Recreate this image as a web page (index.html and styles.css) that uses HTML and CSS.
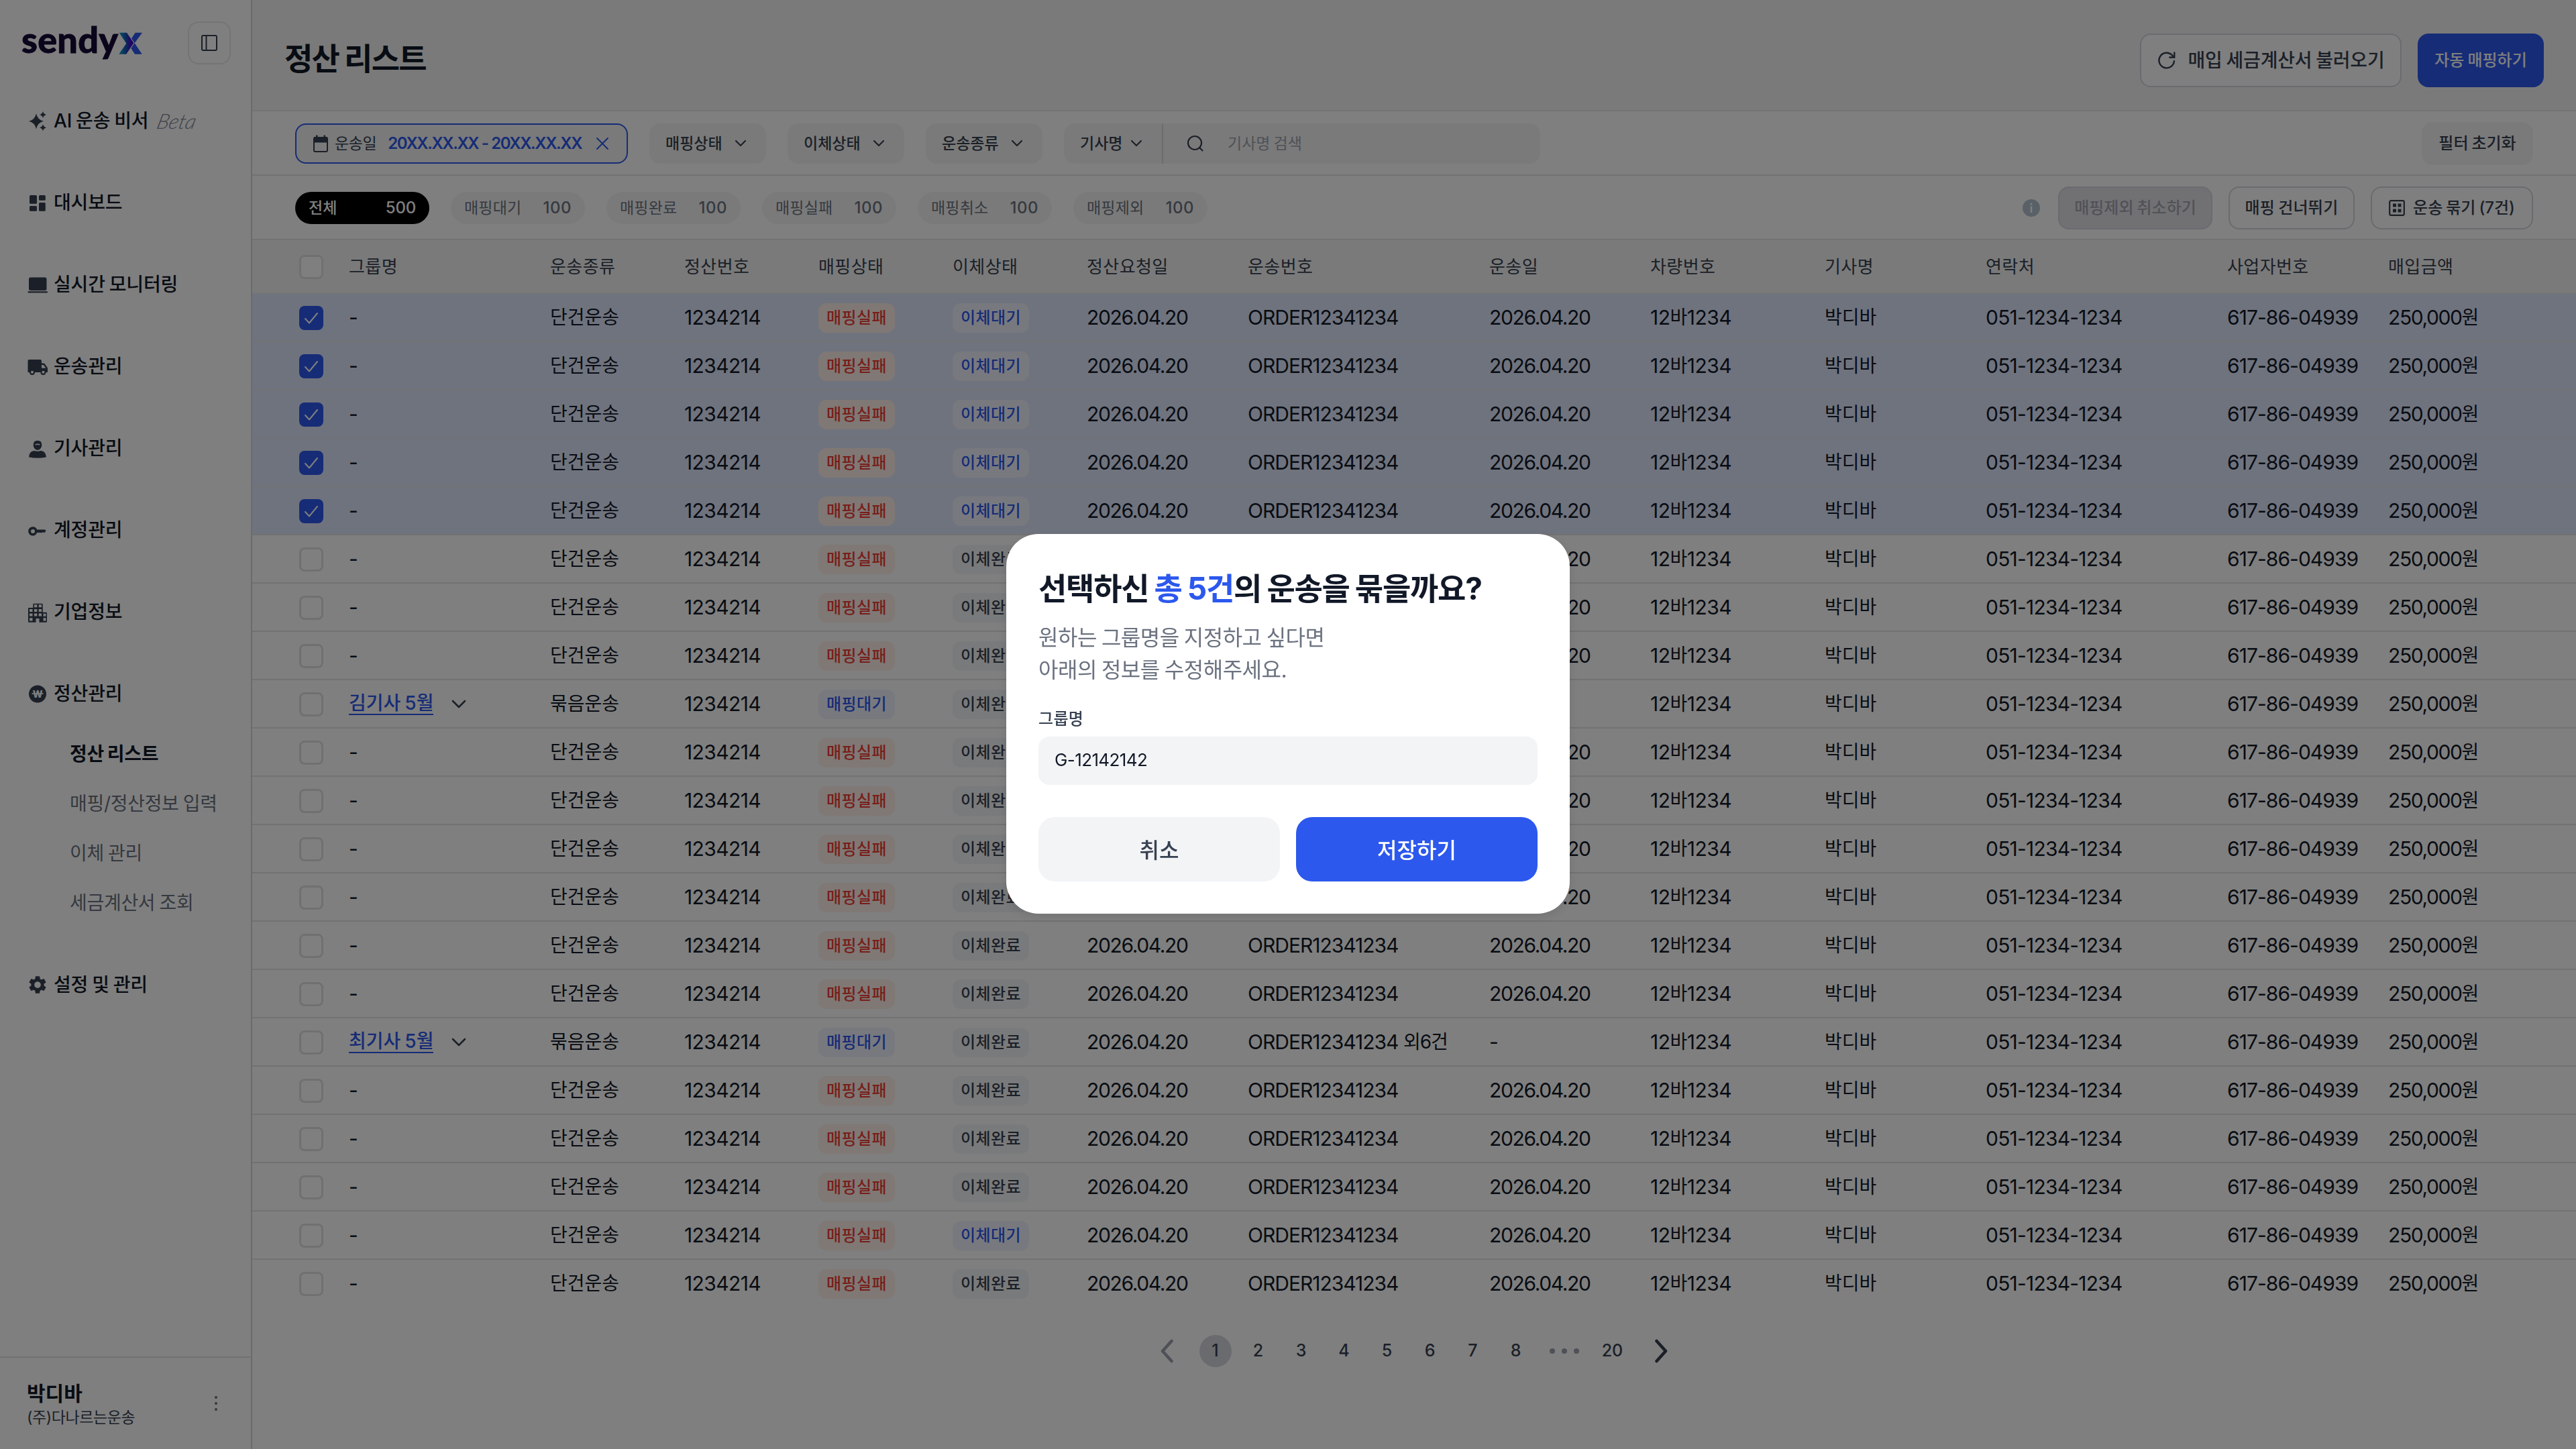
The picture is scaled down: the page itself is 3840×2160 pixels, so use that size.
FILE: index.html
```html
<!DOCTYPE html>
<html lang="ko">
<head>
    <meta charset="UTF-8">
    <meta name="viewport" content="width=device-width, initial-scale=1.0">
    <title>정산 리스트 - sendyx</title>
    <link rel="stylesheet" href="styles.css">
</head>
<body>
    <div class="app">
        <aside class="sidebar">
            <div class="sidebar-top">
                <svg class="logo" width="184" height="76" viewBox="0 -8 184 76">
                    <defs>
                        <linearGradient id="mark" x1="0" y1="0" x2="1" y2="0">
                            <stop offset="0" stop-color="#0aa5cc"/>
                            <stop offset="0.5" stop-color="#1a4fb4"/>
                            <stop offset="0.85" stop-color="#4600d0"/>
                            <stop offset="1" stop-color="#3c00b4"/>
                        </linearGradient>
                    </defs>
                    <text class="logo-text" x="0" y="46" textLength="144">sendy</text>
                    <path fill="url(#mark)" d="M145.7 15.7H157L167.3 31 156.3 47.7H145.3L156.3 31.7Z"/>
                    <path fill="#2c58ed" d="M169.7 15.7H180L168.7 31.3 179.7 47.7H169L163.3 38.9 168.5 31 164 24.3Z"/>
                </svg>
                <button class="collapse">
                    <svg width="32" height="32" viewBox="0 0 32 32" fill="none" stroke="#374151" stroke-width="2">
                        <rect x="5" y="5" width="22" height="22" rx="2"/>
                        <path d="M11.5 5v22"/>
                    </svg>
                </button>
            </div>

            <nav class="nav">
                <a class="nav-item">
                    <svg class="nav-icon" viewBox="0 0 32 32">
                        <path d="M14 5.3q2 9.2 10.8 11.4Q16 19 14 28.2 12 19 3.2 16.7 12 14.5 14 5.3z"/>
                        <path d="M24 2q1 4 5 5-4 1-5 5-1-4-5-5 4-1 5-5zM24 21.3q1 4 5 5-4 1-5 5-1-4-5-5 4-1 5-5z"/>
                    </svg>
                    <span>AI 운송 비서</span>
                    <em class="beta">Beta</em>
                </a>
                <a class="nav-item">
                    <svg class="nav-icon" viewBox="0 0 32 32">
                        <rect x="4" y="5" width="11" height="12.7" rx="1.5"/>
                        <rect x="18" y="5" width="9.8" height="7.7" rx="1.5"/>
                        <rect x="4" y="21" width="11" height="7.7" rx="1.5"/>
                        <rect x="18" y="16" width="9.8" height="12.7" rx="1.5"/>
                    </svg>
                    <span>대시보드</span>
                </a>
                <a class="nav-item">
                    <svg class="nav-icon" viewBox="0 0 32 32">
                        <rect x="3" y="5.5" width="26.5" height="19.5" rx="2.5"/>
                        <rect x="1.5" y="26.3" width="29.5" height="2.2" rx="1"/>
                    </svg>
                    <span>실시간 모니터링</span>
                </a>
                <a class="nav-item">
                    <svg class="nav-icon" viewBox="0 0 32 32">
                        <path fill-rule="evenodd" d="M3.5 6H20q2 0 2 2v3.5h3.2q1 0 1.6.9l3.6 5.2q.6.9.6 1.8V25h-2.6a4 4 0 0 1-8 0H12a4 4 0 0 1-8 0H1.5V8q0-2 2-2zM22 14v4.8h6.3L25 14zM8 22.8a2 2 0 1 0 0 4 2 2 0 0 0 0-4zM24.4 22.8a2 2 0 1 0 0 4 2 2 0 0 0 0-4z"/>
                    </svg>
                    <span>운송관리</span>
                </a>
                <a class="nav-item">
                    <svg class="nav-icon" viewBox="0 0 32 32">
                        <path fill-rule="evenodd" d="M16 4.8q6.3 0 6.3 6.4c0 4-2.8 7.6-6.3 7.6s-6.3-3.6-6.3-7.6q0-6.4 6.3-6.4zM12.6 10v1.5q3.4-.8 6.8 0V10q-3.4-.8-6.8 0z"/>
                        <path d="M3.2 29.5c0-6 3.5-9.6 8-9.6q4.8 1.5 9.6 0c4.500 0 8 3.600 8 9.600q-12.800 2.400-25.600 0z"/>
                    </svg>
                    <span>기사관리</span>
                </a>
                <a class="nav-item">
                    <svg class="nav-icon" viewBox="0 0 32 32">
                        <path fill-rule="evenodd" d="M9 11.2a6.7 6.7 0 0 1 6.200 4.300H27l1.600 1.700-2.600 3.300-2-1.400-1.800 1.400-1.500-.6h-5.500A6.700 6.700 0 1 1 9 11.200zM9 15a3 3 0 1 0 0 6 3 3 0 0 0 0-6z"/>
                    </svg>
                    <span>계정관리</span>
                </a>
                <a class="nav-item">
                    <svg class="nav-icon" viewBox="0 0 32 32">
                        <path fill-rule="evenodd" d="M10.5 3.7h12q1.2 0 1.2 1.2v11.800h5q1.300 0 1.300 1.300v12.500q0 1.200-1.200 1.200H18.500V26h-5v5.700H3.300Q2 31.700 2 30.500V11.200Q2 10 3.200 10h6.100V4.900q0-1.200 1.200-1.200z
                            M11 5.300v4h4.300v-4zM17.700 5.300v4h4.300v-4zM4 12v4h4.500v-4zM11 12v4h4.300v-4zM17.700 12v4h4.300v-4zM4 18.500v4h4.500v-4zM11 18.500v4h4.300v-4zM17.700 18.500v4h4.300v-4zM24.600 18.700v4h3.900v-4zM4 25.200v4.300h4.500v-4.300zM24.600 25.200v4.300h3.900v-4.300z"/>
                    </svg>
                    <span>기업정보</span>
                </a>
                <a class="nav-item">
                    <svg class="nav-icon" viewBox="0 0 32 32">
                        <circle cx="16" cy="16.5" r="13"/>
                        <path stroke="#fff" stroke-width="1.7" d="M7.500 16h17"/>
                        <text class="won" x="16" y="21.5" text-anchor="middle">W</text>
                    </svg>
                    <span>정산관리</span>
                </a>
                <div class="subnav">
                    <a class="active">정산 리스트</a>
                    <a>매핑/정산정보 입력</a>
                    <a>이체 관리</a>
                    <a>세금계산서 조회</a>
                </div>
                <a class="nav-item">
                    <svg class="nav-icon" viewBox="0 0 24 24">
                        <path d="M19.14 12.94c.04-.3.06-.61.06-.94 0-.32-.02-.64-.07-.94l2.03-1.58c.18-.14.23-.41.12-.61l-1.92-3.32c-.12-.22-.37-.29-.59-.22l-2.39.96c-.5-.38-1.03-.7-1.62-.94L14.4 2.81c-.04-.24-.24-.41-.48-.41h-3.84c-.24 0-.43.17-.47.41L9.25 5.35c-.59.24-1.13.57-1.62.94L5.24 5.33c-.22-.08-.47 0-.59.22L2.74 8.87c-.12.21-.08.47.12.61l2.03 1.58c-.05.3-.09.63-.09.94s.02.64.07.94l-2.03 1.58c-.18.14-.23.41-.12.61l1.92 3.32c.12.22.37.29.59.22l2.39-.96c.5.38 1.03.7 1.62.94l.36 2.54c.05.24.24.41.48.41h3.84c.24 0 .44-.17.47-.41l.36-2.54c.59-.24 1.13-.56 1.62-.94l2.39.96c.22.08.47 0 .59-.22l1.92-3.32c.12-.22.07-.47-.12-.61l-2.01-1.58zM12 15.6c-1.98 0-3.6-1.62-3.6-3.6s1.62-3.6 3.6-3.6 3.6 1.62 3.6 3.6-1.62 3.6-3.6 3.6z"/>
                    </svg>
                    <span>설정 및 관리</span>
                </a>
            </nav>

            <div class="profile">
                <div>
                    <div class="profile-name">박디바</div>
                    <div class="profile-company">(주)다나르는운송</div>
                </div>
                <svg width="8" height="24" viewBox="0 0 8 24" fill="#6b7280">
                    <circle cx="4" cy="3" r="2"/><circle cx="4" cy="12" r="2"/><circle cx="4" cy="21" r="2"/>
                </svg>
            </div>
        </aside>

        <main class="main">
            <header class="page-header">
                <h1>정산 리스트</h1>
                <div class="page-actions">
                    <button class="btn btn-load">
                        <svg width="28" height="30" viewBox="0 0 28 30" fill="none" stroke="#374151" stroke-width="2.4" stroke-linecap="round">
                            <path d="M25 16a11.3 11.3 0 1 1-3.3-9L25 10.5M25.3 3.5v7h-7"/>
                        </svg>
                        <span>매입 세금계산서 불러오기</span>
                    </button>
                    <button class="btn btn-auto">자동 매핑하기</button>
                </div>
            </header>

            <section class="filters">
                <div class="chip chip-date">
                    <svg width="24" height="28" viewBox="0 0 24 28">
                        <rect x="2" y="5" width="20" height="21" rx="2" fill="none" stroke="#374151" stroke-width="2"/>
                        <path fill="#374151" d="M2 4h20v8.5H2zM5 1.5h2.500V5H5zM16.500 1.500H19V5h-2.500z"/>
                    </svg>
                    <span class="date-label">운송일</span>
                    <span class="date-value">20XX.XX.XX - 20XX.XX.XX</span>
                    <svg class="date-clear" width="20" height="20" viewBox="0 0 20 20" fill="none" stroke="#2c58ed" stroke-width="2" stroke-linecap="round">
                        <path d="M2 2l16 16M18 2L2 18"/>
                    </svg>
                </div>
                <div class="chip">매핑상태<svg class="chevron" viewBox="0 0 20 12"><path d="M3 2l7 7 7-7"/></svg></div>
                <div class="chip">이체상태<svg class="chevron" viewBox="0 0 20 12"><path d="M3 2l7 7 7-7"/></svg></div>
                <div class="chip">운송종류<svg class="chevron" viewBox="0 0 20 12"><path d="M3 2l7 7 7-7"/></svg></div>
                <div class="search">
                    <div class="search-type">기사명<svg class="chevron" viewBox="0 0 20 12"><path d="M3 2l7 7 7-7"/></svg></div>
                    <svg class="search-icon" width="28" height="28" viewBox="0 0 28 28" fill="none" stroke="#374151" stroke-width="2.2" stroke-linecap="round">
                        <circle cx="13" cy="13" r="10"/><path d="M20.500 20.500l4 4"/>
                    </svg>
                    <span class="placeholder">기사명 검색</span>
                </div>
                <button class="btn btn-reset">필터 초기화</button>
            </section>

            <section class="tabs">
                <div class="tab selected"><span>전체</span><b>500</b></div>
                <div class="tab"><span>매핑대기</span><b>100</b></div>
                <div class="tab"><span>매핑완료</span><b>100</b></div>
                <div class="tab"><span>매핑실패</span><b>100</b></div>
                <div class="tab"><span>매핑취소</span><b>100</b></div>
                <div class="tab"><span>매핑제외</span><b>100</b></div>
                <div class="tab-actions">
                    <svg width="32" height="32" viewBox="0 0 32 32">
                        <circle cx="16" cy="16" r="13" fill="#b2c0d0"/>
                        <path fill="#fff" d="M14.700 9h2.600v2.600h-2.600zM14.700 13.500h2.600V23h-2.600z"/>
                    </svg>
                    <button class="btn btn-small btn-disabled">매핑제외 취소하기</button>
                    <button class="btn btn-small btn-skip">매핑 건너뛰기</button>
                    <button class="btn btn-small btn-bundle">
                        <svg width="24" height="26" viewBox="0 0 24 26">
                            <rect x="1.200" y="2.200" width="21.600" height="21.600" rx="2" fill="none" stroke="#374151" stroke-width="2.200"/>
                            <path fill="#374151" d="M6 6.500h5v5H6zM13.500 6.500h5v5h-5zM6 14.500h5v5H6zM13.500 14.500h5v5h-5z"/>
                        </svg>
                        운송 묶기 (7건)
                    </button>
                </div>
            </section>

            <section class="table">
                <div class="row head">
                    <div class="check-cell"><i class="check"></i></div>
                    <div>그룹명</div>
                    <div>운송종류</div>
                    <div>정산번호</div>
                    <div>매핑상태</div>
                    <div>이체상태</div>
                    <div>정산요청일</div>
                    <div>운송번호</div>
                    <div>운송일</div>
                    <div>차량번호</div>
                    <div>기사명</div>
                    <div>연락처</div>
                    <div>사업자번호</div>
                    <div>매입금액</div>
                </div>
                <div id="rows"></div>
            </section>

            <div class="pagination">
                <a class="page arrow"><svg width="28" height="36" viewBox="0 0 28 36"><path class="prev" d="M20.500 3L7 18l13.500 15"/></svg></a>
                <a class="page current">1</a>
                <a class="page">2</a>
                <a class="page">3</a>
                <a class="page">4</a>
                <a class="page">5</a>
                <a class="page">6</a>
                <a class="page">7</a>
                <a class="page">8</a>
                <span class="page dots"><i></i><i></i><i></i></span>
                <a class="page">20</a>
                <a class="page arrow"><svg width="28" height="36" viewBox="0 0 28 36"><path class="next" d="M7.500 3L21 18 7.500 33"/></svg></a>
            </div>
        </main>
    </div>

    <div class="overlay">
        <div class="modal">
            <h2>선택하신 <span>총 5건</span>의 운송을 묶을까요?</h2>
            <p>원하는 그룹명을 지정하고 싶다면<br>아래의 정보를 수정해주세요.</p>
            <label class="modal-label">그룹명</label>
            <div class="modal-input">G-12142142</div>
            <div class="modal-actions">
                <button class="btn-cancel">취소</button>
                <button class="btn-save">저장하기</button>
            </div>
        </div>
    </div>

    <script>
        const groups = { 9: '김기사 5월', 16: '최기사 5월' };
        const waiting = [1, 2, 3, 4, 5, 20];
        const checkIcon = '<svg width="36" height="36" viewBox="0 0 36 36"><path d="M9 19l6 6.500L27 11"/></svg>';
        const chevron = '<svg class="group-chevron" viewBox="0 0 24 16"><path d="M3 3l9 9 9-9"/></svg>';

        let html = '';
        for (let i = 1; i <= 21; i++) {
            const group = groups[i];
            const checked = i <= 5;
            html += `
                <div class="row${checked ? ' checked' : ''}">
                    <div class="check-cell"><i class="check">${checked ? checkIcon : ''}</i></div>
                    <div>${group ? `<a class="group">${group}</a>${chevron}` : '<span class="dash">-</span>'}</div>
                    <div class="kr">${group ? '묶음운송' : '단건운송'}</div>
                    <div class="num">1234214</div>
                    <div>${group ? '<span class="badge blue">매핑대기</span>' : '<span class="badge red">매핑실패</span>'}</div>
                    <div>${waiting.includes(i) ? '<span class="badge blue">이체대기</span>' : '<span class="badge">이체완료</span>'}</div>
                    <div class="num date">2026.04.20</div>
                    <div class="num order">ORDER12341234${group ? '&nbsp;<span>외6건</span>' : ''}</div>
                    <div class="num date">${group ? '-' : '2026.04.20'}</div>
                    <div class="num car">12<span>바</span>1234</div>
                    <div class="kr">박디바</div>
                    <div class="num phone">051-1234-1234</div>
                    <div class="num biz">617-86-04939</div>
                    <div class="num price">250,000<span>원</span></div>
                </div>`;
        }
        document.getElementById('rows').innerHTML = html;
    </script>
</body>
</html>
```
FILE: styles.css
```css
* {
    box-sizing: border-box;
}
body {
    margin: 0;
    font-family: Inter, "Noto Sans CJK KR", sans-serif;
    font-size: 28px;
    line-height: 40px;
    word-spacing: -0.05em;
    color: #111827;
    background: #fff;
}
button {
    font: inherit;
    word-spacing: inherit;
    border: none;
    padding: 0;
}
svg {
    display: block;
    flex-shrink: 0;
}
.app {
    display: flex;
    width: 3840px;
    height: 2160px;
    overflow: hidden;
}

/* sidebar */
.sidebar {
    width: 376px;
    flex-shrink: 0;
    display: flex;
    flex-direction: column;
    border-right: 2px solid #d5d6de;
}
.sidebar-top {
    display: flex;
    justify-content: space-between;
    align-items: center;
    height: 119px;
    padding: 9px 30px 0 32px;
}
.logo {
    margin-top: -2px;
    overflow: visible;
}
.logo-text {
    font-family: Lato, sans-serif;
    font-weight: 900;
    font-size: 54px;
    fill: #140a35;
    stroke: #140a35;
    stroke-width: 0.8px;
}
.collapse {
    display: flex;
    align-items: center;
    justify-content: center;
    width: 64px;
    height: 64px;
    border: 2px solid #e8e8ea;
    border-radius: 16px;
    background: #fff;
}
.nav {
    flex: 1;
}
.nav-item {
    display: flex;
    align-items: center;
    height: 122px;
    padding-left: 40px;
    font-weight: 500;
    letter-spacing: -0.15px;
}
.nav-icon {
    width: 32px;
    height: 32px;
    margin-right: 8px;
    fill: #374151;
}
.won {
    font-size: 14px;
    font-weight: 800;
    fill: #fff;
}
.beta {
    margin-left: 14px;
    font-family: Lato, sans-serif;
    font-weight: 300;
    font-size: 31px;
    color: #7f8693;
    transform: skewX(-14deg);
}
.subnav {
    display: flex;
    flex-direction: column;
    margin: -8px 0 24px;
}
.subnav a {
    height: 74px;
    line-height: 74px;
    padding-left: 104px;
    color: #6b7280;
    letter-spacing: -0.3px;
}
.subnav a.active {
    color: #111827;
    font-weight: 700;
}
.profile {
    display: flex;
    justify-content: space-between;
    align-items: center;
    height: 138px;
    padding: 3px 48px 0 40px;
    border-top: 2px solid #e4e4e7;
}
.profile svg {
    margin-top: -3px;
}
.profile-name {
    font-size: 30px;
    font-weight: 700;
    line-height: 38px;
}
.profile-company {
    font-size: 23px;
    line-height: 34px;
    letter-spacing: -0.4px;
    color: #374151;
}

/* header */
.main {
    flex: 1;
}
.page-header {
    display: flex;
    justify-content: space-between;
    align-items: center;
    height: 166px;
    padding: 14px 48px 0;
    background: #f5f5f5;
    box-shadow: inset 0 -2px #e9e9ec;
}
h1 {
    margin: 0;
    padding-bottom: 6px;
    font-size: 46px;
    line-height: 60px;
    font-weight: 700;
    letter-spacing: -1.7px;
}
.page-actions {
    display: flex;
    gap: 24px;
}
.btn {
    display: flex;
    align-items: center;
    justify-content: center;
    border-radius: 16px;
    padding-bottom: 1px;
    font-size: 24px;
    font-weight: 450;
    color: #374151;
    background: #fff;
}
.btn-load {
    width: 390px;
    height: 80px;
    border: 2px solid #d5d6de;
    font-size: 28px;
    letter-spacing: -0.2px;
}
.btn-load svg {
    margin: 1px 18px 0 0;
}
.btn-auto {
    width: 188px;
    height: 80px;
    background: #2c58ed;
    color: #fff;
}

/* filters */
.filters {
    display: flex;
    align-items: center;
    gap: 32px;
    height: 96px;
    padding: 0 64px;
    box-shadow: inset 0 -2px #e4e4e7;
}
.chip {
    display: flex;
    align-items: center;
    justify-content: space-between;
    width: 174px;
    height: 60px;
    padding: 0 28px 1px 24px;
    border-radius: 16px;
    background: #f5f5f5;
    font-size: 23px;
    font-weight: 450;
    color: #374151;
}
.chip-date {
    justify-content: flex-start;
    width: 496px;
    padding: 0 26px 1px 24px;
    border: 2px solid #2c58ed;
}
.date-label {
    margin-left: 9px;
    font-weight: 400;
    letter-spacing: -0.4px;
}
.date-value {
    margin-left: 17px;
    font-size: 24px;
    font-weight: 600;
    letter-spacing: -1.4px;
    word-spacing: 0;
    white-space: nowrap;
    color: #2c58ed;
}
.date-clear {
    margin-left: auto;
    margin-top: 1px;
}
.chevron {
    width: 20px;
    height: 12px;
    fill: none;
    stroke: #374151;
    stroke-width: 2.2;
    stroke-linecap: round;
    stroke-linejoin: round;
}
.search {
    display: flex;
    align-items: center;
    width: 710px;
    height: 60px;
    border-radius: 16px;
    background: #f5f5f5;
    font-size: 23px;
}
.search-type {
    display: flex;
    align-items: center;
    justify-content: space-between;
    width: 148px;
    height: 60px;
    padding: 0 28px 1px 24px;
    border-right: 2px solid #d9dade;
    font-weight: 450;
    color: #374151;
}
.search-icon {
    margin-left: 34px;
}
.placeholder {
    margin-left: 34px;
    padding-bottom: 1px;
    color: #9ca3af;
}
.btn-reset {
    width: 166px;
    height: 64px;
    margin-left: auto;
    background: #f5f5f5;
}

/* status tabs */
.tabs {
    display: flex;
    align-items: center;
    gap: 32px;
    height: 96px;
    padding: 0 64px;
    box-shadow: inset 0 -2px #e4e4e7;
}
.tab {
    display: flex;
    align-items: center;
    justify-content: space-between;
    width: 200px;
    height: 48px;
    padding: 0 20px;
    border-radius: 24px;
    background: #f5f5f5;
    font-size: 23px;
    letter-spacing: 0.2px;
    color: #6b7280;
}
.tab b {
    font-size: 24px;
    font-weight: 500;
    letter-spacing: 0.5px;
}
.tab.selected {
    background: #000;
    color: #fff;
    font-weight: 450;
}
.tab.selected b {
    letter-spacing: -0.2px;
}
.tab-actions {
    display: flex;
    align-items: center;
    gap: 24px;
    margin-left: auto;
}
.btn-small {
    height: 64px;
    border: 2px solid #d5d6de;
}
.btn-disabled {
    width: 230px;
    background: #e2e3e6;
    color: #a3a4b0;
}
.btn-skip {
    width: 188px;
    letter-spacing: 0.2px;
}
.btn-bundle {
    gap: 12px;
    width: 242px;
}

/* table */
.row {
    display: grid;
    grid-template-columns: 144px 300px 200px 200px 200px 200px 240px 360px 240px 260px 240px 360px 240px 280px;
    align-items: center;
    height: 72px;
    box-shadow: inset 0 -2px #e4e4e7;
}
.row > div {
    display: flex;
    align-items: center;
    white-space: nowrap;
}
.head {
    height: 80px;
    background: #f5f5f5;
    font-size: 26px;
    letter-spacing: 0.4px;
    color: #374151;
    box-shadow: inset 0 -2px #ececee;
}
.checked {
    background: #dfe6fd;
    box-shadow: inset 0 -2px #e4e4e7;
}
#rows .row:last-child {
    box-shadow: none;
}
.check-cell {
    padding-left: 70px;
}
.check {
    display: block;
    width: 36px;
    height: 36px;
    border: 3px solid #e1e1e3;
    border-radius: 8px;
    background: #fff;
}
.checked .check {
    border: none;
    background: #2c58ed;
}
.check path {
    fill: none;
    stroke: #fff;
    stroke-width: 2;
    stroke-linecap: round;
    stroke-linejoin: round;
}
.row .kr {
    padding-bottom: 2px;
}
.row .num {
    padding-bottom: 3px;
    font-size: 30px;
    letter-spacing: -0.6px;
    word-spacing: 0;
}
.num span {
    font-size: 28px;
}
.row .date {
    letter-spacing: -1.36px;
}
.row .order {
    letter-spacing: -1px;
}
.row .car {
    letter-spacing: -0.5px;
}
.row .phone {
    letter-spacing: -0.78px;
}
.row .biz {
    letter-spacing: -0.95px;
}
.row .price {
    letter-spacing: -1.4px;
}
.dash {
    font-size: 30px;
    padding-bottom: 3px;
}
.group {
    margin-bottom: 2px;
    line-height: 32px;
    font-weight: 450;
    color: #2c58ed;
    border-bottom: 2px solid #2c58ed;
}
.group-chevron {
    width: 24px;
    height: 16px;
    margin-left: 26px;
    fill: none;
    stroke: #374151;
    stroke-width: 2.6;
    stroke-linecap: round;
    stroke-linejoin: round;
}
.badge {
    height: 44px;
    padding: 0 12px;
    border-radius: 12px;
    background: #f3f4f6;
    font-size: 24px;
    line-height: 43px;
    font-weight: 450;
    letter-spacing: 0.4px;
    color: #374151;
}
.badge.red {
    background: #fff0eb;
    color: #f03d35;
}
.badge.blue {
    background: #f0f3fe;
    color: #2c58ed;
}

/* pagination */
.pagination {
    display: flex;
    justify-content: center;
    gap: 16px;
    padding-top: 40px;
}
.page {
    display: flex;
    align-items: center;
    justify-content: center;
    width: 48px;
    height: 48px;
    padding: 0 1px 2px 0;
    border-radius: 50%;
    font-size: 25px;
    font-weight: 500;
    color: #374151;
}
.page.current {
    background: #d5d6de;
}
.page.arrow {
    padding: 0;
}
.arrow:first-child {
    margin-right: 8px;
}
.arrow path {
    fill: none;
    stroke: #374151;
    stroke-width: 4.6;
    stroke-linecap: round;
    stroke-linejoin: round;
}
.arrow .prev {
    stroke: #9ca3af;
}
.page.dots {
    gap: 10px;
    margin: 0 8px;
    padding: 0;
}
.dots i {
    width: 8px;
    height: 8px;
    flex-shrink: 0;
    border-radius: 50%;
    background: #9ca3af;
}
.arrow:last-child {
    margin-left: 8px;
}

/* bundle modal */
.overlay {
    position: fixed;
    inset: 0;
    display: flex;
    align-items: center;
    justify-content: center;
    padding-bottom: 2px;
    background: rgba(0, 0, 0, 0.5);
}
.modal {
    width: 840px;
    padding: 48px;
    border-radius: 48px;
    background: #fff;
    box-shadow: 0 4px 16px rgba(0, 0, 0, 0.1);
}
.modal h2 {
    margin: 1px 0 18px;
    font-size: 46px;
    line-height: 64px;
    font-weight: 700;
    letter-spacing: -1.25px;
}
.modal h2 span {
    color: #2c58ed;
}
.modal p {
    margin: 0 0 32px;
    font-size: 32px;
    line-height: 48px;
    letter-spacing: -0.5px;
    color: #6b7280;
}
.modal-label {
    display: block;
    margin-bottom: 9px;
    font-size: 24px;
    line-height: 34px;
    font-weight: 450;
    letter-spacing: 0.3px;
    color: #374151;
}
.modal-input {
    height: 72px;
    padding-left: 24px;
    border-radius: 16px;
    background: #f3f4f6;
    font-size: 26px;
    line-height: 70px;
    letter-spacing: -0.6px;
}
.modal-actions {
    display: flex;
    gap: 24px;
    margin-top: 48px;
}
.modal-actions button {
    flex: 1;
    height: 96px;
    padding-top: 3px;
    border-radius: 24px;
    font-size: 32px;
    font-weight: 450;
}
.btn-cancel {
    background: #f3f4f6;
    color: #374151;
}
.btn-save {
    background: #2c58ed;
    color: #fff;
}
```
